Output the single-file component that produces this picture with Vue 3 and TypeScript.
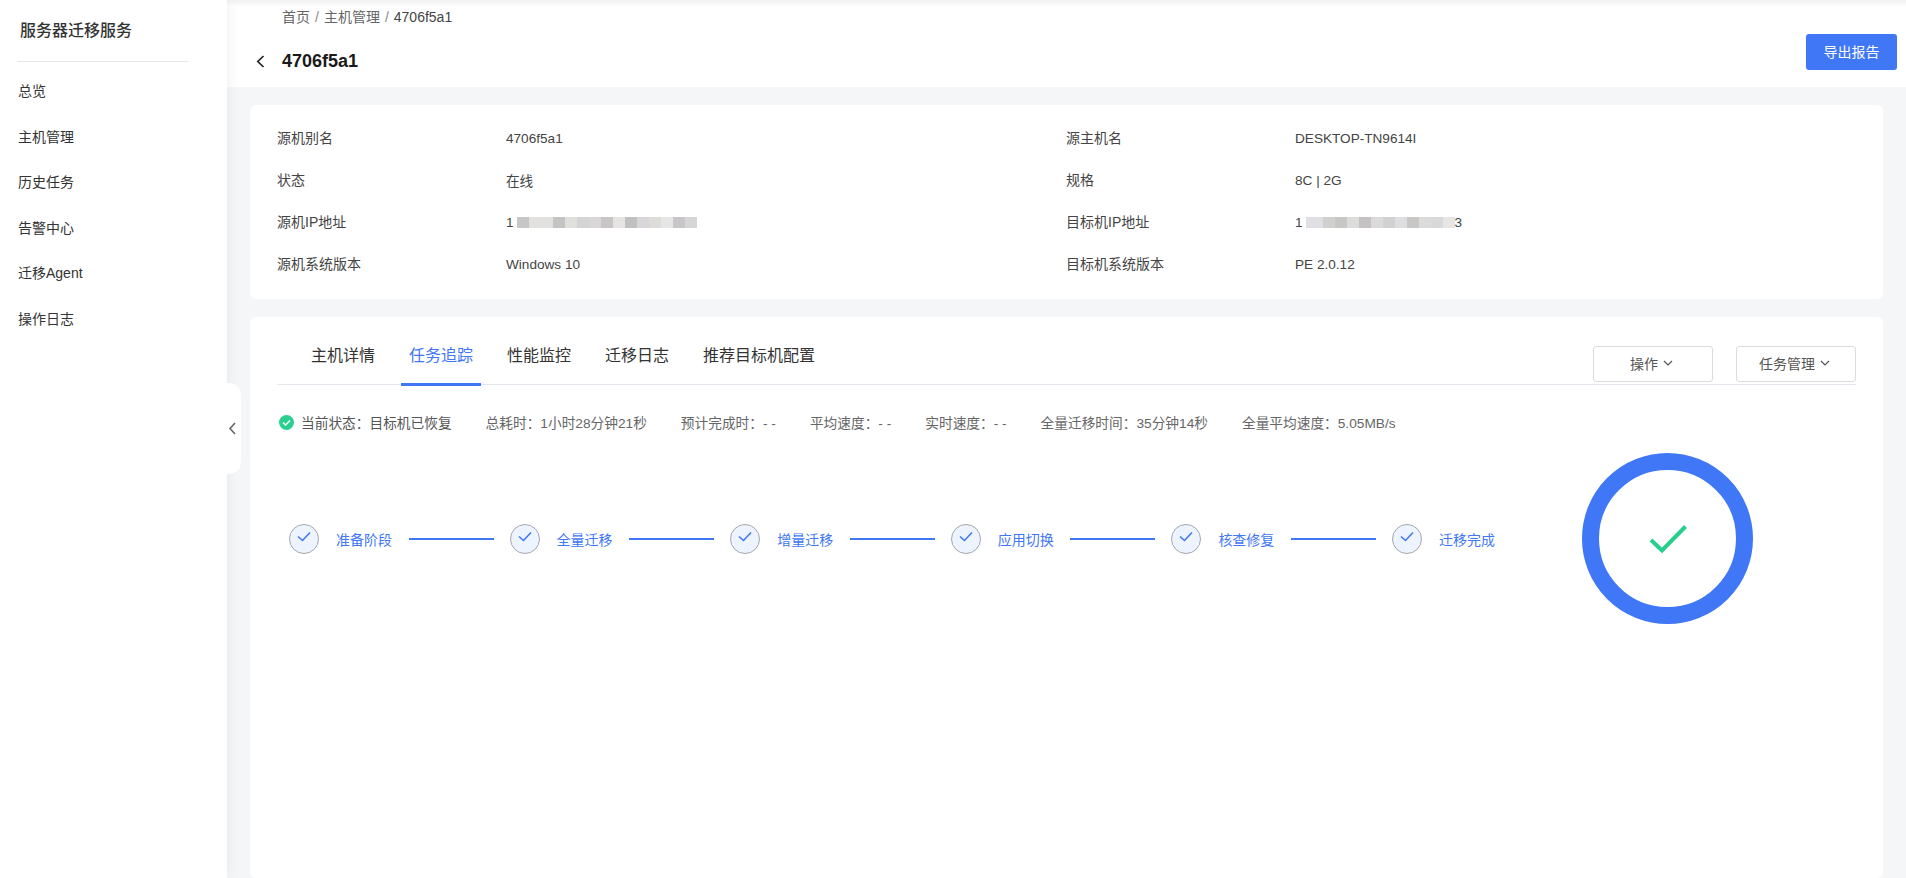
<script setup lang="ts">
interface InfoRow {
  label: string;
  value?: string;
  blur?: { lead: string; tail?: string; cells: [string, number][] };
}

const menus = ['总览', '主机管理', '历史任务', '告警中心', '迁移Agent', '操作日志'];
const tabs = ['主机详情', '任务追踪', '性能监控', '迁移日志', '推荐目标机配置'];
const steps = ['准备阶段', '全量迁移', '增量迁移', '应用切换', '核查修复', '迁移完成'];
const stats = [
  '总耗时：1小时28分钟21秒',
  '预计完成时：- -',
  '平均速度：- -',
  '实时速度：- -',
  '全量迁移时间：35分钟14秒',
  '全量平均速度：5.05MB/s',
];

const sourceCells: [string, number][] = [
  '#c6c6c6', '#e2e1df', '#e2e1df', '#c4c4c4', '#dfdfdc', '#d4d4d4', '#d9d7d7', '#c8c6c6',
  '#e5e4e2', '#c0c0c0', '#d8d6d8', '#dedcd9', '#e6e6e6', '#c8c6c9', '#d6d6d6',
].map((c) => [c, 12]);
const targetCells: [string, number][] = [
  ['#e0dfe3', 17], ['#d0d0ce', 12], ['#c6c8c6', 12], ['#dcdcda', 12], ['#c4c2c2', 12], ['#dcdbd9', 12],
  ['#d2d1d1', 12], ['#dedddf', 12], ['#c8c7c5', 12], ['#dcdbdb', 12], ['#dad9d9', 12], ['#e8e6e4', 12],
];

const infoRows: InfoRow[] = [
  { label: '源机别名', value: '4706f5a1' },
  { label: '源主机名', value: 'DESKTOP-TN9614I' },
  { label: '状态', value: '在线' },
  { label: '规格', value: '8C | 2G' },
  { label: '源机IP地址', blur: { lead: '1', cells: sourceCells } },
  { label: '目标机IP地址', blur: { lead: '1', tail: '3', cells: targetCells } },
  { label: '源机系统版本', value: 'Windows 10' },
  { label: '目标机系统版本', value: 'PE 2.0.12' },
];
</script>

<template>
  <div class="page">
    <aside class="sidebar">
      <div class="brand">服务器迁移服务</div>
      <nav class="menu">
        <a v-for="m in menus" :key="m" class="menu-item">{{ m }}</a>
      </nav>
    </aside>

    <div class="collapse">
      <svg width="9" height="13" viewBox="0 0 9 13">
        <path d="M7 1 L2 6.5 L7 12" fill="none" stroke="#666" stroke-width="1.6" />
      </svg>
    </div>

    <main class="main">
      <header class="head">
        <div class="crumbs">
          <span>首页</span><i>/</i><span>主机管理</span><i>/</i><span class="crumb-last">4706f5a1</span>
        </div>
        <div class="title-row">
          <svg class="back" width="9" height="13" viewBox="0 0 9 13">
            <path d="M7.5 1 L1.8 6.5 L7.5 12" fill="none" stroke="#222" stroke-width="1.7" />
          </svg>
          <h1>4706f5a1</h1>
          <button class="export">导出报告</button>
        </div>
      </header>

      <div class="content">
        <section class="card info">
          <div v-for="row in infoRows" :key="row.label" class="info-row">
            <span class="info-label">{{ row.label }}</span>
            <span v-if="row.value" class="info-value">{{ row.value }}</span>
            <span v-else-if="row.blur" class="info-value ip">
              {{ row.blur.lead }}
              <span class="mosaic">
                <b
                  v-for="(cell, i) in row.blur.cells"
                  :key="i"
                  :style="{ background: cell[0], width: cell[1] + 'px' }"
                ></b>
              </span>
              {{ row.blur.tail }}
            </span>
          </div>
        </section>

        <section class="card task">
          <div class="tabbar">
            <a v-for="t in tabs" :key="t" class="tab" :class="{ active: t === '任务追踪' }">{{ t }}</a>
            <div class="actions">
              <button class="ghost">
                <span>操作</span>
                <svg width="10" height="6" viewBox="0 0 10 6"><path d="M1 1 L5 5 L9 1" fill="none" stroke="#555" stroke-width="1.2" /></svg>
              </button>
              <button class="ghost">
                <span>任务管理</span>
                <svg width="10" height="6" viewBox="0 0 10 6"><path d="M1 1 L5 5 L9 1" fill="none" stroke="#555" stroke-width="1.2" /></svg>
              </button>
            </div>
          </div>

          <div class="status">
            <span class="current">
              <svg width="15" height="15" viewBox="0 0 15 15">
                <circle cx="7.5" cy="7.5" r="7.5" fill="#2ad08f" />
                <path d="M4 7.6 L6.6 10 L11 5.4" fill="none" stroke="#fff" stroke-width="1.5" />
              </svg>
              当前状态：目标机已恢复
            </span>
            <span v-for="s in stats" :key="s">{{ s }}</span>
          </div>

          <div class="progress">
            <div class="steps">
              <div v-for="(s, i) in steps" :key="s" class="step">
                <span class="dot">
                  <svg width="14" height="11" viewBox="0 0 14 11">
                    <path d="M1 5.5 L5.5 9.5 L13 1.5" fill="none" stroke="#3f77f6" stroke-width="1.6" />
                  </svg>
                </span>
                <span class="step-name">{{ s }}</span>
                <span v-if="i < steps.length - 1" class="step-line"></span>
              </div>
            </div>
            <div class="ring">
              <svg width="38" height="30" viewBox="0 0 38 30">
                <path d="M2 16 L13 26.5 L36.5 2.5" fill="none" stroke="#26d08c" stroke-width="4" />
              </svg>
            </div>
          </div>
        </section>
      </div>
    </main>

    <div class="top-shade"></div>
  </div>
</template>

<style>
html,
body {
  margin: 0;
  overflow: hidden;
}
</style>

<style scoped>
.page {
  position: relative;
  display: flex;
  width: 1906px;
  height: 878px;
  overflow: hidden;
  background: #f5f6f8;
  font-family: "Liberation Sans", "Noto Sans CJK SC", sans-serif;
  font-size: 14px;
  color: #333;
}

.top-shade {
  position: absolute;
  top: 0;
  left: 0;
  right: 0;
  height: 7px;
  background: linear-gradient(#f1f1f3, rgba(255, 255, 255, 0));
}

.sidebar {
  flex: none;
  width: 227px;
  background: #fff;
  box-shadow: 0 0 14px rgba(0, 0, 0, 0.07);
  z-index: 1;
}

.brand {
  margin: 0 39px 0 17px;
  padding: 20px 0 0 3px;
  height: 41px;
  border-bottom: 1px solid #e6e6ee;
  font-size: 16px;
  line-height: 22px;
  font-weight: 500;
  color: #333;
}

.menu {
  padding-top: 7px;
}

.menu-item {
  display: block;
  height: 45.6px;
  line-height: 45.6px;
  padding-left: 18px;
  color: #333;
}

.collapse {
  position: absolute;
  left: 227px;
  top: 383px;
  z-index: 2;
  width: 14px;
  height: 91px;
  padding-right: 3px;
  box-sizing: border-box;
  display: flex;
  align-items: center;
  justify-content: center;
  background: #fff;
  border-radius: 0 12px 12px 0;
}

.main {
  flex: 1;
  min-width: 0;
  display: flex;
  flex-direction: column;
}

.head {
  height: 87px;
  background: #fff;
  box-sizing: border-box;
  padding: 7px 9px 0 55px;
}

.crumbs {
  display: flex;
  line-height: 20px;
  color: #666;
}

.crumbs i {
  font-style: normal;
  margin: 0 5px;
  color: #888;
}

.crumb-last {
  color: #444;
}

.title-row {
  display: flex;
  align-items: flex-start;
  height: 36px;
  margin-top: 7px;
}

.back {
  margin: 21px 17px 0 -26px;
}

h1 {
  margin: 15px 0 0;
  font-size: 18px;
  line-height: 24px;
  font-weight: 700;
  color: #1a1a1a;
}

.export {
  margin-left: auto;
  width: 91px;
  height: 36px;
  padding: 0 0 2px;
  border: 0;
  border-radius: 3px;
  background: #3f77f6;
  color: #fff;
  font: inherit;
}

.content {
  flex: 1;
  display: flex;
  flex-direction: column;
  gap: 18px;
  padding: 18px 23px 0;
  min-height: 0;
}

.card {
  background: #fff;
  border-radius: 6px;
}

.info {
  display: grid;
  grid-template-columns: 789px 1fr;
  grid-auto-rows: 42px;
  padding: 12px 27px 14px;
}

.info-row {
  display: flex;
  align-items: center;
}

.info-label {
  width: 229px;
  margin-top: -2px;
  color: #444;
}

.info-value {
  font-size: 13.6px;
  color: #444;
}

.ip {
  display: flex;
  align-items: center;
}

.mosaic {
  display: flex;
  margin-left: 3px;
}

.mosaic b {
  display: block;
  height: 11px;
}

.task {
  flex: 1;
  padding: 0 27px;
}

.tabbar {
  display: flex;
  height: 67px;
  border-bottom: 1px solid #e6e6ee;
  padding-left: 26px;
}

.tab {
  position: relative;
  height: 39px;
  padding: 28px 8px 0;
  margin-right: 18px;
  font-size: 16px;
  line-height: 22px;
  color: #333;
}

.tab.active {
  color: #3f77f6;
}

.tab.active::after {
  content: "";
  position: absolute;
  left: 0;
  right: 0;
  bottom: -2px;
  height: 3px;
  background: #3f77f6;
}

.actions {
  margin-left: auto;
  display: flex;
  gap: 23px;
  padding-top: 29px;
}

.ghost {
  display: flex;
  align-items: center;
  justify-content: center;
  gap: 5px;
  width: 120px;
  height: 36px;
  padding: 0 3px 3px 0;
  background: #fff;
  border: 1px solid #dcdcdc;
  border-radius: 3px;
  font: inherit;
  color: #555;
}

.status {
  display: flex;
  gap: 34px;
  align-items: center;
  height: 20px;
  margin-top: 27px;
  padding-left: 2px;
  font-size: 13.7px;
  color: #666;
}

.current {
  display: flex;
  align-items: center;
  gap: 7px;
  color: #555;
}

.progress {
  display: flex;
  align-items: center;
  margin-top: 21px;
  padding-left: 12px;
}

.steps {
  display: flex;
}

.step {
  display: flex;
  align-items: center;
  height: 30px;
}

.dot {
  flex: none;
  box-sizing: border-box;
  width: 30px;
  height: 30px;
  padding-bottom: 4px;
  display: flex;
  align-items: center;
  justify-content: center;
  border: 1px solid #a3a6ac;
  border-radius: 50%;
  background: #eef4ff;
}

.step-name {
  width: 56px;
  margin-left: 17px;
  color: #3f77f6;
  white-space: nowrap;
}

.step-line {
  width: 85px;
  height: 2px;
  margin: 1px 16px 0 16.6px;
  background: #3f77f6;
}

.ring {
  flex: none;
  box-sizing: border-box;
  width: 171px;
  height: 171px;
  margin-left: auto;
  margin-right: 103px;
  border: 17px solid #3f77f6;
  border-radius: 50%;
  display: flex;
  align-items: center;
  justify-content: center;
}
</style>
